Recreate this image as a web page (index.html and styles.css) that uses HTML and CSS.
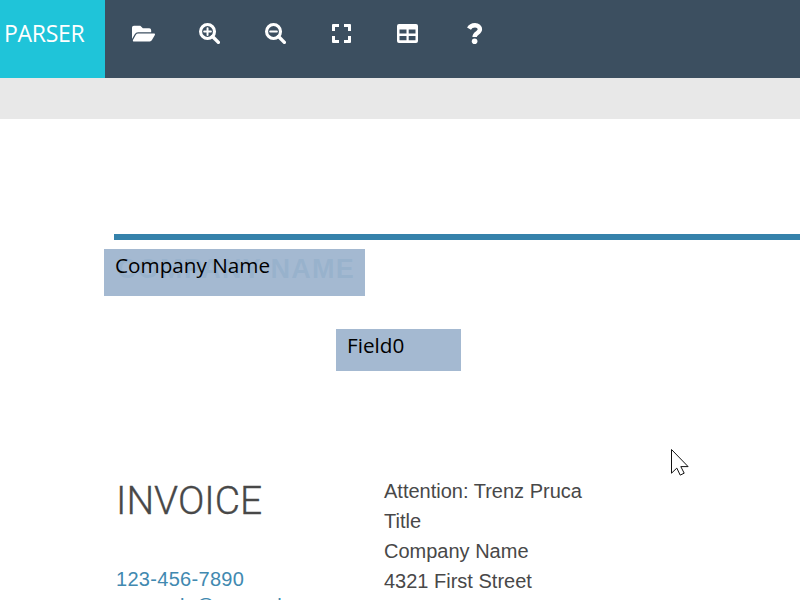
FILE: index.html
```html
<!DOCTYPE html>
<html lang="en">
<head>
<meta charset="utf-8">
<title>Parser</title>
<link rel="stylesheet" href="styles.css">
</head>
<body>
<header class="topbar">
  <div class="brand">PARSER</div>
  <nav class="tools">
    <button class="tool open" aria-label="Open"><svg width="23" height="21" viewBox="0 0 576 512" preserveAspectRatio="none"><path d="M572.700 292.100L500.300 416.200A64 64 0 0 1 445 448H45c-18.500 0-30.100-20.100-20.700-36.100l72.400-124.100A64 64 0 0 1 152 256h400c18.500 0 30 20.100 20.700 36.100zM152 224h328v-48a48 48 0 0 0-48-48H272l-64-64H48a48 48 0 0 0-48 48v278.100l69.100-118.400A96.200 96.200 0 0 1 152 224z"/></svg></button>
    <button class="tool" aria-label="Zoom in"><svg width="21" height="21" viewBox="0 0 512 512"><circle cx="208" cy="208" r="170"/><path d="M330 330L472 472" class="handle"/><path d="M208 126v164M126 208h164" class="sign"/></svg></button>
    <button class="tool" aria-label="Zoom out"><svg width="21" height="21" viewBox="0 0 512 512"><circle cx="208" cy="208" r="170"/><path d="M330 330L472 472" class="handle"/><path d="M126 208h164" class="sign"/></svg></button>
    <button class="tool" aria-label="Fit"><svg width="19" height="19" viewBox="0 0 19 19"><path d="M1 0h6v3H3v4H0V1q0-1 1-1zM12 0h6q1 0 1 1v6h-3V3h-4zM0 12h3v4h4v3H1q-1 0-1-1zM16 12h3v6q0 1-1 1h-6v-3h4z"/></svg></button>
    <button class="tool" aria-label="Table"><svg width="21" height="19" viewBox="0 0 21 19"><path fill-rule="evenodd" d="M2 0h17q2 0 2 2v15q0 2-2 2H2q-2 0-2-2V2q0-2 2-2zM2.500 5.500v4h7v-4zM11.700 5.500v4h6.800v-4zM2.500 12v4.300h7V12zM11.700 12v4.300h6.800V12z"/></svg></button>
    <button class="tool help" aria-label="Help"><svg width="16" height="21" viewBox="0 0 16 21"><path class="hook" d="M2 5.600C3.400 3 5.200 2.200 8 2.200c3 0 4.900 1.700 4.900 4.100 0 3.800-5.300 3.500-5.300 7.700"/><circle class="dot" cx="7.600" cy="18.200" r="2.800"/></svg></button>
  </nav>
</header>
<div class="strip"></div>
<main class="page">
  <hr class="rule">
  <div class="heading">COMPANY NAME</div>
  <div class="details">
    <section class="left">
      <h1 class="title">INVOICE</h1>
      <div class="contact">123-456-7890</div>
      <div class="contact email">no_reply@example.com</div>
    </section>
    <section class="address">
      <div>Attention: Trenz Pruca</div>
      <div>Title</div>
      <div>Company Name</div>
      <div>4321 First Street</div>
    </section>
  </div>
  <div class="field field-company">Company Name</div>
  <div class="field field-zero">Field0</div>
  <svg class="cursor" width="20" height="28" viewBox="0 0 20 28"><path d="M1.500 1.500v23.700l5.300-5.100 3.400 7 4-1.900-3.400-6.600h7.300z"/></svg>
</main>
</body>
</html>
```

FILE: styles.css
```css
* { box-sizing: border-box; }
body {
  margin: 0;
  height: 600px;
  overflow: hidden;
  display: flex;
  flex-direction: column;
  background: #fff;
  font-family: "Liberation Sans", sans-serif;
}
.topbar {
  display: flex;
  flex: 0 0 78px;
  background: #3c4f60;
}
.brand {
  width: 105px;
  padding: 16px 0 0 4px;
  background: #1fc4d9;
  color: #fff;
  font: 23px/34px "Open Sans", sans-serif;
  letter-spacing: -.3px;
}
.tools {
  display: flex;
  padding-left: 5px;
  height: 67px;
}
.tool {
  display: flex;
  align-items: center;
  justify-content: center;
  width: 66px;
  padding: 0;
  border: 0;
  background: none;
}
.open { padding-left: 1px; }
.help { padding-left: 3px; }
.tool svg { display: block; fill: #fff; }
.tool svg circle:not(.dot) { fill: none; stroke: #fff; stroke-width: 76; }
.handle { stroke: #fff; stroke-width: 84; stroke-linecap: round; }
.sign { stroke: #fff; stroke-width: 48; stroke-linecap: round; }
.hook { fill: none; stroke: #fff; stroke-width: 4.400; }
.strip { flex: 0 0 41px; background: #e8e8e8; }
.page {
  position: relative;
  flex: 1;
  min-height: 0;
  overflow: hidden;
  padding: 115px 0 0 114px;
}
.rule {
  height: 6px;
  margin: 0;
  border: 0;
  background: #3582ab;
}
.heading {
  height: 58px;
  padding: 13px 0 0 3px;
  color: #3582ab;
  font-size: 27px;
  line-height: 32px;
  font-weight: 700;
  letter-spacing: 1.300px;
}
.details { display: flex; padding: 178px 0 0 2px; }
.left { width: 268px; }
.title {
  margin: 0;
  padding-top: 2px;
  height: 88px;
  color: #484848;
  font: 300 39px/46px Roboto, sans-serif;
  -webkit-text-stroke: .3px #484848;
}
.contact {
  color: #4189b0;
  font-size: 20px;
  line-height: 30px;
  letter-spacing: .3px;
}
.email { margin-top: -3px; }
.address {
  color: #484848;
  font-size: 20px;
  line-height: 30px;
}
.field {
  position: absolute;
  padding: 0 11px;
  background: rgba(158, 181, 206, .94);
  color: #000;
  font: 20.700px/32px "Open Sans", sans-serif;
}
.field-company { left: 104px; top: 130px; width: 261px; height: 47px; }
.field-zero { left: 336px; top: 210px; width: 125px; height: 42px; }
.cursor { position: absolute; left: 670px; top: 329px; }
.cursor path { fill: #fff; stroke: #111; stroke-width: 1; }
```
